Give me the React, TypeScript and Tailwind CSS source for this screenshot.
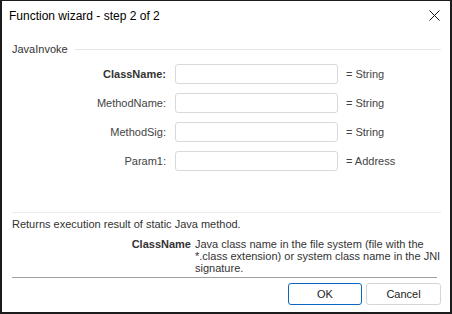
import React from "react";

const rows: { label: string; bold?: boolean; type: string }[] = [
  { label: "ClassName:", bold: true, type: "= String" },
  { label: "MethodName:", type: "= String" },
  { label: "MethodSig:", type: "= String" },
  { label: "Param1:", type: "= Address" },
];

export default function App() {
  return (
    <div
      className="w-[452px] h-[314px] bg-white border-x-2 border-b-2 border-t border-[#1c1c1c] flex flex-col text-[#333333] overflow-hidden"
      style={{ fontFamily: '"Liberation Sans", Arial, sans-serif' }}
    >
      {/* Title bar */}
      <div className="h-[29px] flex items-center pl-[7px] pr-[9px] shrink-0">
        <span className="text-[12px] leading-[14px] text-black">
          Function wizard - step 2 of 2
        </span>
        <div className="flex-1" />
        <svg width="11" height="11" viewBox="0 0 11 11" className="mr-[1px]">
          <path d="M0.5 0.5 L10.5 10.5 M10.5 0.5 L0.5 10.5" stroke="#111" strokeWidth="1" />
        </svg>
      </div>

      {/* Content */}
      <div className="flex flex-col pl-[10px] pr-[9px]">
        <div className="mt-[12px] flex items-center h-[14px]">
          <span className="text-[11px] leading-[14px] text-[#333]">JavaInvoke</span>
          <div className="flex-1 h-px bg-[#e6e6e6] ml-[7px]" />
        </div>

        <div className="mt-[8px] flex flex-col gap-[9px]">
          {rows.map((r) => (
            <div key={r.label} className="flex items-center h-[20px]">
              <div
                className={
                  "w-[154px] text-right text-[11px] leading-[14px] " +
                  (r.bold ? "font-bold text-[#333]" : "text-[#444]")
                }
              >
                {r.label}
              </div>
              <div className="ml-[9px] w-[163px] h-[20px] border border-[#d9d9d9] rounded-[3px] bg-white" />
              <div className="ml-[8px] text-[11px] leading-[14px] text-[#444]">{r.type}</div>
            </div>
          ))}
        </div>

        <div className="mt-[41px] h-px bg-[#ececec]" />

        <div className="mt-[4px] text-[11px] leading-[14px] text-[#333]">
          Returns execution result of static Java method.
        </div>

        <div className="mt-[7px] flex text-[11px] leading-[12px]">
          <div className="w-[179px] text-right font-bold text-[#333] shrink-0">ClassName</div>
          <div className="ml-[4px] text-[#333] whitespace-nowrap">
            <div>Java class name in the file system (file with the</div>
            <div>*.class extension) or system class name in the JNI</div>
            <div>signature.</div>
          </div>
        </div>

        <div className="mt-[3px] h-px bg-[#a0a0a0] mr-[4px]" />

        <div className="mt-[5px] flex justify-end gap-[4px]">
          <button className="w-[74px] h-[22px] rounded-[3px] border border-[#0a68c0] bg-white text-[11px] text-[#222] leading-[14px]">
            OK
          </button>
          <button className="w-[75px] h-[22px] rounded-[3px] border border-[#d6d6d6] bg-white text-[11px] text-[#222] leading-[14px]">
            Cancel
          </button>
        </div>
      </div>
    </div>
  );
}
